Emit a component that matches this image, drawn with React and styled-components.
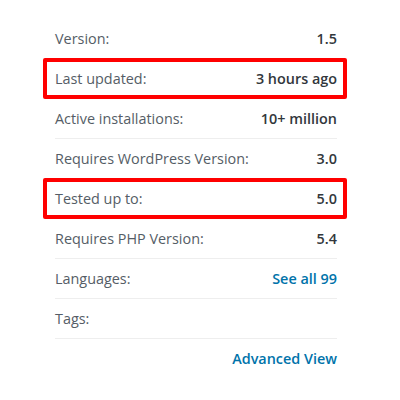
import React from "react";
import styled, { createGlobalStyle } from "styled-components";

const Global = createGlobalStyle`
  html, body { margin: 0; padding: 0; background: #fff; }
  body { font-family: "Open Sans", "Noto Sans", sans-serif; }
`;

const Panel = styled.section`
  width: 282px;
  padding: 19px 0 0 55px;
  font-size: 14.4px;
  line-height: 19px;
`;

const List = styled.ul`
  list-style: none;
  margin: 0;
  padding: 0;
`;

const Row = styled.li`
  position: relative;
  display: flex;
  justify-content: space-between;
  align-items: center;
  padding: 10px 0;
  border-bottom: 1px solid #eeeeee;
  ${(p) =>
    p.$highlight &&
    `
    &::after {
      content: "";
      position: absolute;
      top: -1px;
      bottom: -1px;
      left: -12px;
      right: -10px;
      border: 4px solid #ff0000;
      border-radius: 2px;
      pointer-events: none;
    }
  `}
`;

const Label = styled.span`
  color: #555d66;
  font-weight: 400;
`;

const Value = styled.strong`
  color: #32373c;
  font-weight: 600;
`;

const Link = styled.a`
  color: #0073aa;
  font-weight: 600;
  text-decoration: none;
`;

const Footer = styled.div`
  display: flex;
  justify-content: flex-end;
  padding: 10px 0;
`;

const rows = [
  { label: "Version:", value: "1.5" },
  { label: "Last updated:", value: "3 hours ago", highlight: true },
  { label: "Active installations:", value: "10+ million" },
  { label: "Requires WordPress Version:", value: "3.0" },
  { label: "Tested up to:", value: "5.0", highlight: true },
  { label: "Requires PHP Version:", value: "5.4" },
  { label: "Languages:", link: "See all 99" },
  { label: "Tags:" },
];

export default function App() {
  return (
    <>
      <Global />
      <Panel>
        <List>
          {rows.map((r) => (
            <Row key={r.label} $highlight={r.highlight}>
              <Label>{r.label}</Label>
              {r.value && <Value>{r.value}</Value>}
              {r.link && <Link href="#">{r.link}</Link>}
            </Row>
          ))}
        </List>
        <Footer>
          <Link href="#">Advanced View</Link>
        </Footer>
      </Panel>
    </>
  );
}
